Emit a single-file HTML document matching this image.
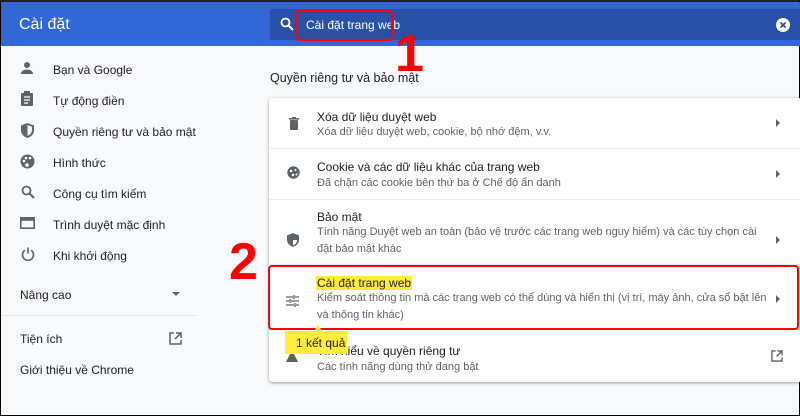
<!DOCTYPE html>
<html><head><meta charset="utf-8"><style>
*{margin:0;padding:0;box-sizing:border-box}
body{width:800px;height:416px;overflow:hidden;background:#f8f9fa;font-family:"Liberation Sans",Arial,sans-serif;position:relative;border:1px solid #000;border-top:2px solid #222}
.hdr{position:absolute;left:0;top:0;width:800px;height:44px;background:#3367d6}
.hdr .t{position:absolute;left:18px;top:14px;color:#fff;font-size:16px}
.sb{position:absolute;left:269px;top:7px;width:531px;height:31px;background:#2a51a8}
.sb .q{position:absolute;left:36px;top:9px;color:#fff;font-size:12px}
.red{position:absolute;border:2px solid #f00;border-radius:4px}
.side div{position:absolute;font-size:12px;color:#202124;white-space:nowrap}
.ic{position:absolute}
.card{position:absolute;left:268px;top:96px;width:534px;height:284px;background:#fff;box-shadow:0 1px 2px rgba(60,64,67,.3),0 1px 3px 1px rgba(60,64,67,.15);border-radius:4px}
.row{position:absolute;left:0;width:100%;border-top:1px solid #e8eaed}
.row .a{position:absolute;left:48px;font-size:12px;color:#202124;white-space:nowrap}
.row .b{position:absolute;left:48px;font-size:11px;color:#5f6368;line-height:17px;width:455px}
.arr{position:absolute;left:507px;width:0;height:0;border-top:4px solid transparent;border-bottom:4px solid transparent;border-left:4px solid #5f6368}
.num{position:absolute;color:#f00;font-weight:bold;font-size:52px;font-family:"Liberation Sans",sans-serif}
</style></head><body>
<div class="hdr"><div class="t">Cài đặt</div></div>
<div class="sb">
<svg class="ic" style="left:10px;top:8px" width="14" height="14" viewBox="0 0 14 14"><circle cx="5.5" cy="5.5" r="4" fill="none" stroke="#fff" stroke-width="1.8"/><path d="M8.5 8.5L13 13" stroke="#fff" stroke-width="2"/></svg>
<div class="q">Cài đặt trang web</div>
<svg class="ic" style="left:506px;top:9px" width="14" height="14" viewBox="0 0 14 14"><circle cx="7" cy="7" r="7" fill="#fff"/><path d="M4.5 4.5L9.5 9.5M9.5 4.5L4.5 9.5" stroke="#2a51a8" stroke-width="1.8"/></svg>
</div>
<div class="red" style="left:294px;top:8px;width:98px;height:31px"></div>
<div class="num" style="left:394px;top:22px">1</div>

<div class="side">
<svg class="ic" style="left:19px;top:59px" width="14" height="14" viewBox="0 0 14 14" fill="#5f6368"><circle cx="7" cy="4" r="3"/><path d="M1 13c0-3 3-4.5 6-4.5s6 1.5 6 4.5z"/></svg>
<div style="left:52px;top:61px">Bạn và Google</div>
<svg class="ic" style="left:20px;top:89px" width="12" height="15" viewBox="0 0 12 15" fill="#5f6368"><rect x="0" y="2" width="12" height="13" rx="1"/><rect x="3" y="0" width="6" height="3" fill="#5f6368"/><path d="M3 6h6M3 9h6M3 12h4" stroke="#fff" stroke-width="1.2"/></svg>
<div style="left:52px;top:92px">Tự động điền</div>
<svg class="ic" style="left:20px;top:121px" width="13" height="15" viewBox="0 0 13 15"><path d="M6.5 0L0 2.5V7c0 4 3 7 6.5 8 3.5-1 6.5-4 6.5-8V2.5z" fill="#5f6368"/><path d="M6.5 2v11c2.5-1 4.5-3.5 4.5-6V3.6z" fill="#fff" opacity=".9"/></svg>
<div style="left:52px;top:123px">Quyền riêng tư và bảo mật</div>
<svg class="ic" style="left:19px;top:152px" width="15" height="15" viewBox="0 0 15 15"><circle cx="7.5" cy="7.5" r="7" fill="#5f6368"/><circle cx="4" cy="7" r="1.3" fill="#fff"/><circle cx="6" cy="4" r="1.3" fill="#fff"/><circle cx="10" cy="4" r="1.3" fill="#fff"/><circle cx="7" cy="11" r="1.8" fill="#fff"/></svg>
<div style="left:52px;top:154px">Hình thức</div>
<svg class="ic" style="left:20px;top:183px" width="14" height="14" viewBox="0 0 14 14"><circle cx="5.5" cy="5.5" r="4" fill="none" stroke="#5f6368" stroke-width="1.8"/><path d="M8.5 8.5L13 13" stroke="#5f6368" stroke-width="2"/></svg>
<div style="left:52px;top:185px">Công cụ tìm kiếm</div>
<svg class="ic" style="left:19px;top:215px" width="15" height="12" viewBox="0 0 15 12"><rect x="0.8" y="0.8" width="13.4" height="10.4" fill="none" stroke="#5f6368" stroke-width="1.6"/><rect x="0.8" y="0.8" width="13.4" height="3" fill="#5f6368"/></svg>
<div style="left:52px;top:216px">Trình duyệt mặc định</div>
<svg class="ic" style="left:20px;top:245px" width="14" height="14" viewBox="0 0 14 14"><path d="M4 3.2A5.5 5.5 0 1 0 10 3.2" fill="none" stroke="#5f6368" stroke-width="1.7"/><path d="M7 0.5v6" stroke="#5f6368" stroke-width="1.7"/></svg>
<div style="left:52px;top:247px">Khi khởi động</div>
<div style="left:19px;top:286px">Nâng cao</div>
<div style="left:171px;top:290px;width:0;height:0;border-left:4px solid transparent;border-right:4px solid transparent;border-top:4px solid #5f6368"></div>
<div style="left:0;top:313px;width:195px;height:1px;background:#e3e3e3"></div>
<div style="left:19px;top:330px">Tiện ích</div>
<svg class="ic" style="left:168px;top:330px" width="13" height="13" viewBox="0 0 13 13" fill="none" stroke="#5f6368" stroke-width="1.5"><path d="M5 1H1v11h11V8"/><path d="M7 1h5v5M12 1L6 7"/></svg>
<div style="left:19px;top:361px">Giới thiệu về Chrome</div>
</div>

<div style="position:absolute;left:269px;top:69px;font-size:12.5px;color:#202124">Quyền riêng tư và bảo mật</div>

<div class="card">
<div class="row" style="top:0;height:50px;border-top:none">
<svg class="ic" style="left:20px;top:19px" width="10" height="13" viewBox="0 0 10 13" fill="#5f6368"><rect x="0" y="1" width="10" height="1.6"/><rect x="3" y="0" width="4" height="1.5"/><rect x="1" y="3" width="8" height="10" rx="1"/></svg>
<div class="a" style="top:12px">Xóa dữ liệu duyệt web</div>
<div class="b" style="top:26px">Xóa dữ liệu duyệt web, cookie, bộ nhớ đệm, v.v.</div>
<div class="arr" style="top:21px"></div></div>
<div class="row" style="top:50px;height:51px">
<svg class="ic" style="left:18px;top:17px" width="13" height="13" viewBox="0 0 13 13"><circle cx="6.5" cy="6.5" r="6.2" fill="#5f6368"/><circle cx="4" cy="5" r="1.2" fill="#fff"/><circle cx="8.5" cy="4" r="1" fill="#fff"/><circle cx="6" cy="9" r="1.2" fill="#fff"/><circle cx="9.5" cy="8.5" r="1" fill="#fff"/></svg>
<div class="a" style="top:11px">Cookie và các dữ liệu khác của trang web</div>
<div class="b" style="top:26px">Đã chặn các cookie bên thứ ba ở Chế độ ẩn danh</div>
<div class="arr" style="top:21px"></div></div>
<div class="row" style="top:101px;height:65px">
<svg class="ic" style="left:18px;top:33px" width="12" height="14" viewBox="0 0 13 15"><path d="M6.5 0L0 2.5V7c0 4 3 7 6.5 8 3.5-1 6.5-4 6.5-8V2.5z" fill="#5f6368"/><path d="M6.5 2.5v5H11c0 2.5-2 5-4.5 5.8z" fill="#fff"/></svg>
<div class="a" style="top:10px">Bảo mật</div>
<div class="b" style="top:24px">Tính năng Duyệt web an toàn (bảo vệ trước các trang web nguy hiểm) và các tùy chọn cài đặt bảo mật khác</div>
<div class="arr" style="top:36px"></div></div>
<div class="row" style="top:166px;height:65px">
<svg class="ic" style="left:17px;top:30px" width="13" height="12" viewBox="0 0 13 12" stroke="#5f6368" stroke-width="1.3"><path d="M0 2h7M9 2h4M8 0v4M0 6h3M5 6h8M4 4v4M0 10h8M10 10h3M9 8v4"/></svg>
<div class="a" style="top:11px;background:#ffeb3b;padding:0 1px;left:47px">Cài đặt trang web</div>
<div class="b" style="top:25px">Kiểm soát thông tin mà các trang web có thể dùng và hiển thị (vị trí, máy ảnh, cửa sổ bật lên và thông tin khác)</div>
<div class="arr" style="top:30px"></div></div>
<div class="row" style="top:231px;height:53px">
<svg class="ic" style="left:17px;top:20px" width="12" height="12" viewBox="0 0 12 12" fill="#5f6368"><path d="M4 0h4v4l4 8H0l4-8z"/></svg>
<div class="a" style="top:14px">Tìm hiểu về quyền riêng tư</div>
<div class="b" style="top:29px">Các tính năng dùng thử đang bật</div>
<svg class="ic" style="left:502px;top:20px" width="12" height="12" viewBox="0 0 13 13" fill="none" stroke="#5f6368" stroke-width="1.5"><path d="M5 1H1v11h11V8"/><path d="M7 1h5v5M12 1L6 7"/></svg>
</div>
</div>
<div class="red" style="left:267px;top:263px;width:531px;height:65px"></div>
<div style="position:absolute;left:284px;top:329px;width:62px;height:23px;background:#ffeb3b;font-size:12px;color:#202124;padding:5px 0 0 11px;white-space:nowrap">1 kết quả</div>
<div style="position:absolute;left:313px;top:323px;width:0;height:0;border-left:4px solid transparent;border-right:4px solid transparent;border-bottom:6px solid #ffeb3b"></div>
<div class="num" style="left:228px;top:230px">2</div>
</body></html>
